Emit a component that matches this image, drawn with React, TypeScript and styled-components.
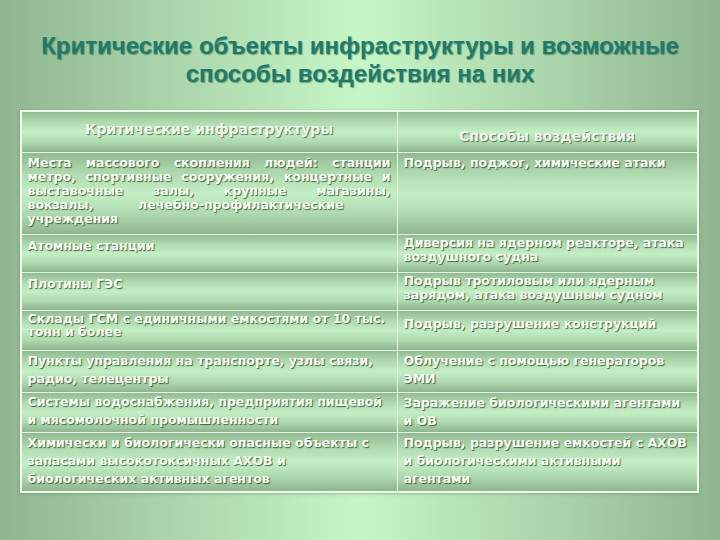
import React from "react";
import styled, { createGlobalStyle } from "styled-components";

const ShortLine = styled.span`
  display: block;
  width: 316px;
  text-align: justify;
  text-align-last: justify;
`;

type Row = {
  left: React.ReactNode;
  right: string;
  justify?: boolean;
  lh: number;
  padL: number;
  padR: number;
};

const rows: Row[] = [
  {
    left: (
      <>
        Места массового скопления людей: станции метро, спортивные сооружения, концертные и выставочные залы, крупные
        магазины,
        <ShortLine>вокзалы, лечебно-профилактические</ShortLine>
        учреждения
      </>
    ),
    right: "Подрыв, поджог, химические атаки",
    justify: true,
    lh: 14,
    padL: 3,
    padR: 3,
  },
  { left: "Атомные станции", right: "Диверсия на ядерном реакторе, атака воздушного судна", lh: 14, padL: 4, padR: 1 },
  { left: "Плотины ГЭС", right: "Подрыв тротиловым или ядерным зарядом, атака воздушным судном", lh: 14, padL: 4, padR: 1 },
  { left: "Склады ГСМ с единичными емкостями от 10 тыс. тонн и более", right: "Подрыв, разрушение конструкций", lh: 13, padL: 1, padR: 6 },
  { left: "Пункты управления на транспорте, узлы связи, радио, телецентры", right: "Облучение с помощью генераторов ЭМИ", lh: 18, padL: 1, padR: 1 },
  { left: "Системы водоснабжения, предприятия пищевой и мясомолочной промышленности", right: "Заражение биологическими агентами и ОВ", lh: 18, padL: 0, padR: 1 },
  { left: "Химически и биологически опасные объекты с запасами высокотоксичных АХОВ и биологических активных агентов", right: "Подрыв, разрушение емкостей с АХОВ и биологическими активными агентами", lh: 18, padL: 1, padR: 1 },
];

export default function App() {
  return (
    <>
      <GlobalStyle />
      <Page>
        <Title>
          Критические объекты инфраструктуры и возможные
          <br />
          способы воздействия на них
        </Title>
        <Table>
          <HeadCell $pad={9}>
            <HeadText>Критические инфраструктуры</HeadText>
          </HeadCell>
          <HeadCell $right $pad={16}>
            <HeadText>Способы воздействия</HeadText>
          </HeadCell>
          {rows.map((r, i) => (
            <React.Fragment key={i}>
              <Cell $justify={r.justify} $lh={r.lh} $pad={r.padL}>
                {r.left}
              </Cell>
              <Cell $right $lh={r.lh} $pad={r.padR}>
                {r.right}
              </Cell>
            </React.Fragment>
          ))}
        </Table>
      </Page>
    </>
  );
}

const GlobalStyle = createGlobalStyle`
  html, body {
    margin: 0;
    padding: 0;
  }
  body {
    width: 720px;
    height: 540px;
    overflow: hidden;
  }
`;

const Page = styled.div`
  width: 720px;
  height: 540px;
  box-sizing: border-box;
  padding-top: 32px;
  display: flex;
  flex-direction: column;
  align-items: center;
  background: linear-gradient(
    to right,
    #90b690 0%,
    #a9d3a9 22%,
    #c6f6c6 50%,
    #a9d3a9 78%,
    #90b690 100%
  );
`;

const Title = styled.h1`
  margin: 0 0 22px;
  font-family: "Liberation Sans", Arial, sans-serif;
  font-size: 24px;
  line-height: 28px;
  font-weight: bold;
  text-align: center;
  color: #1e7b6b;
  text-shadow: 1px 1px 1px rgba(10, 70, 55, 0.45);
`;

const Table = styled.div`
  margin-left: -2px;
  display: grid;
  grid-template-columns: 375px 300px;
  grid-template-rows: 41px 82px 38px 38px 40px 42px 40px 58px;
  border: 2px solid #eefbee;
  box-shadow: 0 1px 3px rgba(60, 100, 60, 0.35);
`;

const cellGradient = `linear-gradient(
  to bottom,
  #93bb93 0%,
  #afd9af 25%,
  #c4efc4 50%,
  #afd9af 75%,
  #8fb68f 100%
)`;

const HeadCell = styled.div<{ $right?: boolean; $pad: number }>`
  display: flex;
  justify-content: center;
  align-items: flex-start;
  padding-top: ${(p) => p.$pad}px;
  box-sizing: border-box;
  background: ${cellGradient};
  border-left: ${(p) => (p.$right ? "1px solid #e2f5e2" : "none")};
  border-bottom: 1px solid #e2f5e2;
`;

const HeadText = styled.span`
  font-family: "DejaVu Sans", Verdana, sans-serif;
  font-size: 14px;
  line-height: 16px;
  font-weight: bold;
  color: rgba(252, 255, 252, 0.92);
  text-shadow: 1px 1px 1px rgba(60, 95, 60, 0.8);
`;

const Cell = styled.div<{ $right?: boolean; $justify?: boolean; $lh: number; $pad: number }>`
  padding: ${(p) => p.$pad}px 6px 0 6px;
  box-sizing: border-box;
  background: ${cellGradient};
  border-left: ${(p) => (p.$right ? "1px solid #e2f5e2" : "none")};
  border-bottom: 1px solid #e2f5e2;
  font-family: "DejaVu Sans", Verdana, sans-serif;
  font-size: 12.5px;
  font-weight: bold;
  line-height: ${(p) => p.$lh}px;
  color: #f6fff6;
  text-align: ${(p) => (p.$justify ? "justify" : "left")};
  text-align-last: ${(p) => (p.$justify ? "justify" : "auto")};
  text-shadow: 1px 1px 1px rgba(40, 70, 40, 0.8);
  overflow: hidden;

  &:nth-last-child(-n + 2) {
    border-bottom: none;
  }
`;
